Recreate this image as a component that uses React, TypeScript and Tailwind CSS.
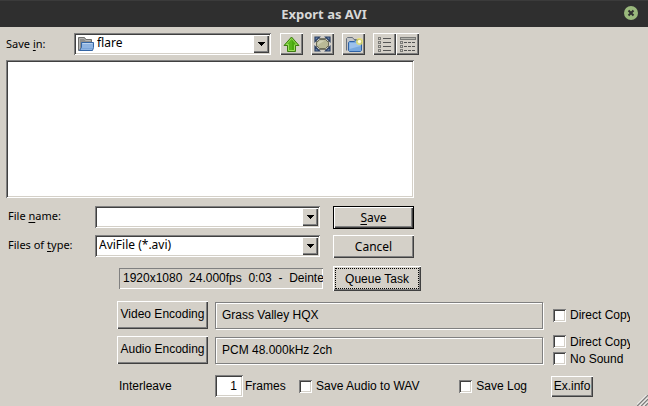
import { useState } from 'react';
import type { ReactNode } from 'react';
import clsx from 'clsx';

const RAISED =
  'bg-[#d4d0c8] shadow-[inset_1px_1px_#ffffff,inset_-1px_-1px_#404040,inset_-2px_-2px_#808080]';
const SUNKEN =
  'shadow-[inset_1px_1px_#808080,inset_-1px_-1px_#ffffff,inset_2px_2px_#404040,inset_-2px_-2px_#d4d0c8]';
const ETCHED =
  'border border-[#808080] shadow-[inset_1px_1px_#ffffff,1px_1px_#ffffff]';
const UI_FONT = "font-['Noto_Sans',sans-serif]";

interface CheckBoxProps {
  label: string;
  clipped?: boolean;
}

function CheckBox({ label, clipped }: CheckBoxProps) {
  return (
    <label className={clsx('flex items-center gap-1 h-[17px] whitespace-nowrap', clipped && 'overflow-hidden')}>
      <input
        type="checkbox"
        className={clsx('appearance-none w-[13px] h-[13px] shrink-0 bg-white checked:bg-[#404040]', SUNKEN)}
      />
      <span>{label}</span>
    </label>
  );
}

interface ToolButtonProps {
  title: string;
  children: ReactNode;
}

function ToolButton({ title, children }: ToolButtonProps) {
  return (
    <button
      type="button"
      aria-label={title}
      className={clsx('w-[23px] h-[22px] shrink-0 flex items-center justify-center', RAISED)}
    >
      {children}
    </button>
  );
}

function DropArrow() {
  return (
    <svg width="7" height="4" viewBox="0 0 7 4" shapeRendering="crispEdges" aria-hidden="true">
      <path d="M0 0h7v1H6v1H5v1H4v1H3V3H2V2H1V1H0z" fill="#000" />
    </svg>
  );
}

function FolderIcon() {
  return (
    <svg width="16" height="16" viewBox="0 0 16 16" aria-hidden="true">
      <path d="M.5 14.5v-13h6l1.5 2h5.500v11z" fill="#8f8f8d" stroke="#70706e" />
      <path d="M1.5 13.500V2.500H6l1.500 2H12.500" fill="none" stroke="#b4b4b2" />
      <path d="M3.5 6.500h12v5l-1 3h-13l2-3z" fill="#8fb4e2" stroke="#3465a4" strokeLinejoin="round" />
      <path d="M4.500 7.500h10" stroke="#bcd4f0" />
      <path d="M3.500 12.500h10.500" stroke="#7aa5da" />
    </svg>
  );
}

function UpIcon() {
  return (
    <svg width="17" height="17" viewBox="0 0 17 17" aria-hidden="true">
      <path d="M8.5 1 16 9.500h-3.500v6h-8v-6H1z" fill="#57b51a" stroke="#3f7d12" strokeLinejoin="round" />
      <path d="M8.500 2.600 3.200 8.500h2.300v6h6v-6h2.300z" fill="none" stroke="#9ade5c" />
      <path d="M9 4v10h2V8.500h2z" fill="#4aa80f" />
    </svg>
  );
}

function DesktopIcon() {
  return (
    <svg width="17" height="16" viewBox="0 0 17 16" aria-hidden="true">
      <path d="M5 2.500h7M5 13.500h7M2.500 5v6M14.500 5v6" stroke="#77776a" />
      <path d="M5.500 3.500h6l3 3v3l-3 3h-6l-3-3v-3z" fill="#b9b996" stroke="#6c6c59" />
      <path d="M6 4.500h5l-5 3-2.500 2V7z" fill="#d0d0b5" />
      <path
        d="M1 1h4.500L1 5.500zM16 1h-4.500L16 5.500zM1 15h4.500L1 10.500zM16 15h-4.500l4.500-4.500z"
        fill="#6482b0"
        stroke="#2b3f61"
        strokeWidth="1.2"
      />
    </svg>
  );
}

function NewFolderIcon() {
  return (
    <svg width="18" height="17" viewBox="0 0 18 17" aria-hidden="true">
      <path d="M1.500 14.500v-12l1-1h5l1.500 2h6V13" fill="#c3c5c7" stroke="#68717d" />
      <path d="M3.500 14.500v-8l1-1H9l1.500-1h6v10l-1 1h-11z" fill="#78a8df" stroke="#2f62a5" />
      <path d="M4.500 7h11v3l-11 3z" fill="#9cc1ec" />
      <circle cx="14.500" cy="5.500" r="3.500" fill="#f0e45c" opacity=".75" />
      <circle cx="14.500" cy="5.500" r="1.700" fill="#fffde0" />
    </svg>
  );
}

function ListIcon() {
  return (
    <svg width="17" height="17" viewBox="0 0 17 17" fill="none" stroke="#7b7b78" aria-hidden="true">
      {[1, 5, 9, 13].map((y) => (
        <g key={y}>
          <rect x="2.5" y={y + 0.5} width="2" height="2" />
          <path d={`M7 ${y + 1.5}h8`} stroke="#555" />
        </g>
      ))}
    </svg>
  );
}

function DetailsIcon() {
  return (
    <svg width="18" height="17" viewBox="0 0 18 17" fill="none" stroke="#7b7b78" aria-hidden="true">
      <rect x="1.5" y="1.5" width="15" height="2" fill="#b5b5af" />
      {[5, 9, 13].map((y) => (
        <g key={y}>
          <rect x="1.5" y={y + 0.5} width="2" height="2" />
          <path d={`M5 ${y + 1.5}h12`} stroke="#555" strokeDasharray="3 1" />
        </g>
      ))}
    </svg>
  );
}

function SelectArrow() {
  return (
    <span
      className={clsx(
        'absolute right-[2px] top-[2px] bottom-[2px] w-4 flex items-center justify-center pointer-events-none',
        RAISED
      )}
    >
      <DropArrow />
    </span>
  );
}

function FileBrowser() {
  const [fileName, setFileName] = useState('');

  return (
    <section className={clsx('pl-1.5 pr-[234px] pt-[6px] text-[11px] leading-4', UI_FONT)}>
      {/* Folder and toolbar */}
      <div className="flex items-center">
        <label htmlFor="folder" className="w-[68px] shrink-0">
          Save <u className="underline-offset-2">i</u>n:
        </label>
        <div className="relative flex-1 min-w-0">
          <select
            id="folder"
            className={clsx('appearance-none block w-full h-[22px] bg-white pl-[23px] pr-5 pb-[2px] text-xs', SUNKEN)}
          >
            <option>flare</option>
          </select>
          <span className="absolute left-1 top-[3px] pointer-events-none">
            <FolderIcon />
          </span>
          <SelectArrow />
        </div>
        <div className="flex gap-2 pl-[9px] -mr-[5px]">
          <ToolButton title="Up one level"><UpIcon /></ToolButton>
          <ToolButton title="Desktop"><DesktopIcon /></ToolButton>
          <ToolButton title="Create new folder"><NewFolderIcon /></ToolButton>
          <div className="flex">
            <ToolButton title="List"><ListIcon /></ToolButton>
            <ToolButton title="Details"><DetailsIcon /></ToolButton>
          </div>
        </div>
      </div>

      {/* File list */}
      <div role="listbox" aria-label="Files" className={clsx('mt-[5px] h-[138px] bg-white', SUNKEN)} />

      {/* Name and type */}
      <div className="flex items-start mt-2">
        <label htmlFor="file-name" className="w-[89px] pl-0.5 pt-[2px] shrink-0">
          File <u className="underline-offset-2">n</u>ame:
        </label>
        <div className={clsx('flex flex-1 min-w-0 h-[22px] bg-white p-[2px]', SUNKEN)}>
          <input
            id="file-name"
            type="text"
            value={fileName}
            onChange={(e) => setFileName(e.target.value)}
            className="flex-1 min-w-0 px-1 bg-transparent outline-none text-xs"
          />
          <button
            type="button"
            aria-label="Recent names"
            className={clsx('w-4 flex items-center justify-center', RAISED)}
          >
            <DropArrow />
          </button>
        </div>
        <button
          type="submit"
          className={clsx('ml-[13px] w-[81px] h-[23px] shrink-0 border border-black text-xs', RAISED)}
        >
          <u className="underline-offset-2">S</u>ave
        </button>
      </div>
      <div className="flex items-start mt-1.5">
        <label htmlFor="file-type" className="w-[89px] pl-0.5 pt-[2px] shrink-0">
          Files of <u className="underline-offset-2">t</u>ype:
        </label>
        <div className="relative flex-1 min-w-0">
          <select
            id="file-type"
            className={clsx('appearance-none block w-full h-[22px] bg-white pl-1 pr-5 pb-[2px] text-xs', SUNKEN)}
          >
            <option>AviFile (*.avi)</option>
          </select>
          <SelectArrow />
        </div>
        <button type="button" className={clsx('ml-[13px] w-[81px] h-[23px] shrink-0 text-xs', RAISED)}>
          Cancel
        </button>
      </div>
    </section>
  );
}

interface EncodingRowProps {
  button: string;
  codec: string;
  children: ReactNode;
}

function EncodingRow({ button, codec, children }: EncodingRowProps) {
  return (
    <div className="flex items-center gap-[7px] pr-[18px]">
      <button type="button" className={clsx('w-[91px] h-7 shrink-0 pb-[2px] whitespace-nowrap', RAISED)}>
        {button}
      </button>
      <div className={clsx('flex-1 min-w-0 h-[27px] px-1.5 leading-6 truncate', ETCHED)}>{codec}</div>
      <div className="w-[77px] shrink-0 ml-[3px]">{children}</div>
    </div>
  );
}

function EncodingOptions() {
  return (
    <section className="pl-[117px] pt-2 text-[12px] leading-4 font-['Liberation_Sans',Arial,sans-serif]">
      <div className="flex items-start pr-[227px]">
        <div className="ml-0.5 mt-[2px] flex-1 min-w-0 h-[21px] px-1 leading-5 overflow-hidden whitespace-pre shadow-[inset_1px_1px_#808080,inset_-1px_-1px_#ffffff]">
          {'1920x1080  24.000fps  0:03  -  Deinterlace'}
        </div>
        <button type="button" className={clsx('ml-2.5 w-[88px] h-[25px] p-[2px] shrink-0', RAISED)}>
          <span className="flex h-full items-center justify-center border border-dotted border-black">
            Queue Task
          </span>
        </button>
      </div>

      <div className="flex flex-col gap-1 mt-2.5">
        <EncodingRow button="Video Encoding" codec="Grass Valley HQX">
          <CheckBox label="Direct Copy" clipped />
        </EncodingRow>
        <EncodingRow button="Audio Encoding" codec="PCM 48.000kHz 2ch">
          <CheckBox label="Direct Copy" clipped />
          <CheckBox label="No Sound" />
        </EncodingRow>
      </div>

      <div className="flex items-center mt-2 pr-[55px]">
        <label htmlFor="interleave" className="w-[98px] pl-0.5 shrink-0">Interleave</label>
        <input
          id="interleave"
          type="text"
          defaultValue="1"
          className={clsx('w-7 h-[22px] px-1.5 bg-white text-right outline-none', SUNKEN)}
        />
        <span className="w-14 pl-0.5 shrink-0">Frames</span>
        <CheckBox label="Save Audio to WAV" />
        <div className="ml-auto flex items-center gap-6">
          <CheckBox label="Save Log" />
          <button type="button" className={clsx('w-[42px] h-[21px]', RAISED)}>Ex.info</button>
        </div>
      </div>
    </section>
  );
}

export default function App() {
  return (
    <form
      onSubmit={(e) => e.preventDefault()}
      className="relative min-h-screen bg-[#d4d0c8] text-black overflow-hidden"
    >
      <header className="relative flex items-center justify-center h-[27px] pt-px bg-[#2f2f2f] border-t border-[#3b3b3b]">
        <h1 className={clsx('text-[13px] font-bold text-[#d8d8d8]', UI_FONT)}>Export as AVI</h1>
        <button
          type="button"
          aria-label="Close"
          className="absolute right-[10px] top-[5px] w-3.5 h-3.5"
        >
          <svg width="14" height="14" viewBox="0 0 14 14" className="block">
            <circle cx="7" cy="7" r="7" fill="#9ab87c" />
            <path d="m4.5 4.5 5 5m0-5-5 5" stroke="#2f2f2f" strokeWidth="2" />
          </svg>
        </button>
      </header>
      <FileBrowser />
      <EncodingOptions />
      <svg className="absolute right-0 bottom-0" width="11" height="11" viewBox="0 0 11 11" aria-hidden="true">
        <path d="M0 11 11 0M4 11l7-7M8 11l3-3" stroke="#808080" strokeWidth="1.5" />
        <path d="M-1.5 11 11-1.500M2.500 11 11 2.500M6.500 11 11 6.500" stroke="#fff" />
      </svg>
    </form>
  );
}
